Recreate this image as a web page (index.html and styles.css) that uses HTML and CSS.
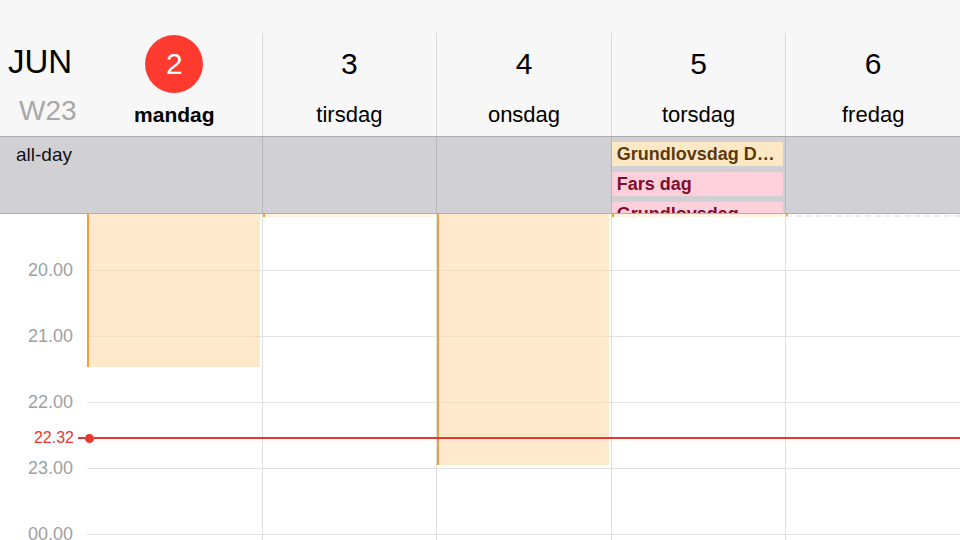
FILE: index.html
```html
<!DOCTYPE html>
<html lang="da">
<head>
    <meta charset="UTF-8">
    <title>Kalender - uge 23</title>
    <link rel="stylesheet" href="styles.css">
</head>
<body>
    <div class="calendar">
        <!-- Week header -->
        <div class="week-header">
            <div class="month-cell">
                <div class="month">JUN</div>
                <div class="week-no">W23</div>
            </div>
            <div class="day-head today">
                <div class="day-num">2</div>
                <div class="day-name">mandag</div>
            </div>
            <div class="day-head">
                <div class="day-num">3</div>
                <div class="day-name">tirsdag</div>
            </div>
            <div class="day-head">
                <div class="day-num">4</div>
                <div class="day-name">onsdag</div>
            </div>
            <div class="day-head">
                <div class="day-num">5</div>
                <div class="day-name">torsdag</div>
            </div>
            <div class="day-head">
                <div class="day-num">6</div>
                <div class="day-name">fredag</div>
            </div>
        </div>

        <!-- All-day row -->
        <div class="allday">
            <div class="allday-label">all-day</div>
            <div class="allday-cell first"></div>
            <div class="allday-cell"></div>
            <div class="allday-cell"></div>
            <div class="allday-cell">
                <div class="allday-event yellow">Grundlovsdag Danmark</div>
                <div class="allday-event pink">Fars dag</div>
                <div class="allday-event pink">Grundlovsdag</div>
            </div>
            <div class="allday-cell"></div>
        </div>

        <!-- Time grid -->
        <div class="timegrid">
            <div class="hours">
                <div class="hour">20.00</div>
                <div class="hour">21.00</div>
                <div class="hour">22.00</div>
                <div class="hour">23.00</div>
                <div class="hour">00.00</div>
            </div>
            <div class="day-col first">
                <div class="event" style="top: -10px; height: 163px;"></div>
            </div>
            <div class="day-col">
                <div class="event tail" style="top: -10px; height: 13px;"></div>
            </div>
            <div class="day-col">
                <div class="event" style="top: -10px; height: 261px;"></div>
            </div>
            <div class="day-col">
                <div class="event tail" style="top: -10px; height: 13px;"></div>
            </div>
            <div class="day-col">
                <div class="event tail dashed" style="top: -10px; height: 13px;"></div>
            </div>

            <!-- Current time -->
            <div class="now" style="top: 214px;">
                <div class="now-label">22.32</div>
                <div class="now-dash"></div>
                <div class="now-dot"></div>
                <div class="now-line"></div>
            </div>
        </div>
    </div>
</body>
</html>
```

FILE: styles.css
```css
* {
    box-sizing: border-box;
}

body {
    margin: 0;
    font-family: "Liberation Sans", Arial, sans-serif;
    background-color: #ffffff;
    color: #000000;
}

.calendar {
    width: 960px;
    height: 540px;
    overflow: hidden;
}

/* Header */
.week-header {
    display: grid;
    grid-template-columns: 87px repeat(5, 1fr);
    height: 137px;
    background-color: #f7f7f7;
    border-bottom: 1px solid #a9a9ae;
}

.month-cell {
    padding: 42px 0 0 8px;
}

.month {
    font-size: 33px;
    line-height: 40px;
}

.week-no {
    margin-top: 12px;
    padding-left: 11px;
    font-size: 28px;
    line-height: 34px;
    color: #a8a8a8;
}

.day-head {
    margin-top: 33px;
    border-left: 1px solid #d9d9d9;
    display: flex;
    flex-direction: column;
    align-items: center;
}

.today {
    border-left: none;
}

.day-num {
    width: 58px;
    height: 58px;
    margin-top: 2px;
    border-radius: 50%;
    font-size: 30px;
    line-height: 58px;
    text-align: center;
}

.today .day-num {
    background-color: #ff3b30;
    color: #ffffff;
}

.day-name {
    margin-top: 8px;
    font-size: 22px;
    line-height: 28px;
}

.today .day-name {
    font-weight: bold;
    font-size: 21px;
}

/* All-day */
.allday {
    display: grid;
    grid-template-columns: 87px repeat(5, 1fr);
    height: 77px;
    background-color: #d0d0d5;
    border-bottom: 1px solid #aeaeb3;
}

.allday-label {
    padding: 7px 0 0 16px;
    font-size: 19px;
    line-height: 22px;
    color: #111111;
}

.allday-cell {
    border-left: 1px solid #b6b6bb;
    padding: 5px 2px 0 0;
    display: flex;
    flex-direction: column;
    gap: 6px;
    overflow: hidden;
}

.allday-cell.first {
    border-left: none;
}

.allday-event {
    flex-shrink: 0;
    height: 24px;
    padding: 0 8px 0 5px;
    font-size: 18px;
    font-weight: bold;
    line-height: 24px;
    white-space: nowrap;
    overflow: hidden;
    text-overflow: ellipsis;
}

.allday-event.yellow {
    background-color: #fde8c5;
    color: #5b3a10;
}

.allday-event.pink {
    background-color: #fdd0dc;
    color: #7d0e2d;
}

/* Time grid */
.timegrid {
    position: relative;
    display: grid;
    grid-template-columns: 87px repeat(5, 1fr);
    height: 326px;
    overflow: hidden;
}

.hours {
    padding-top: 46px;
}

.hour {
    height: 66px;
    padding-right: 14px;
    font-size: 18px;
    line-height: 20px;
    text-align: right;
    color: #a0a0a0;
}

.day-col {
    position: relative;
    border-left: 1px solid #dedede;
    background-image: linear-gradient(to bottom, #e2e2e2 1px, transparent 1px);
    background-size: 100% 66px;
    background-position: 0 56px;
}

.day-col.first {
    border-left: none;
}

.event {
    position: absolute;
    left: 0;
    right: 2px;
    background-color: rgba(253, 218, 170, 0.6);
    border-left: 2px solid #eda13a;
}

.event.tail {
    background-color: rgba(253, 218, 170, 0.35);
}

.event.dashed {
    right: 0;
    background-color: transparent;
    border-bottom: 2px dashed #ececec;
}

/* Now indicator */
.now {
    position: absolute;
    left: 0;
    right: 0;
    height: 20px;
    display: flex;
    align-items: center;
}

.now-label {
    width: 74px;
    font-size: 16px;
    text-align: right;
    color: #e5392f;
}

.now-dash {
    width: 7px;
    height: 2px;
    margin-left: 4px;
    background-color: #e5392f;
}

.now-dot {
    width: 9px;
    height: 9px;
    border-radius: 50%;
    background-color: #e5392f;
}

.now-line {
    flex: 1;
    height: 2px;
    background-color: #e5392f;
}
```
